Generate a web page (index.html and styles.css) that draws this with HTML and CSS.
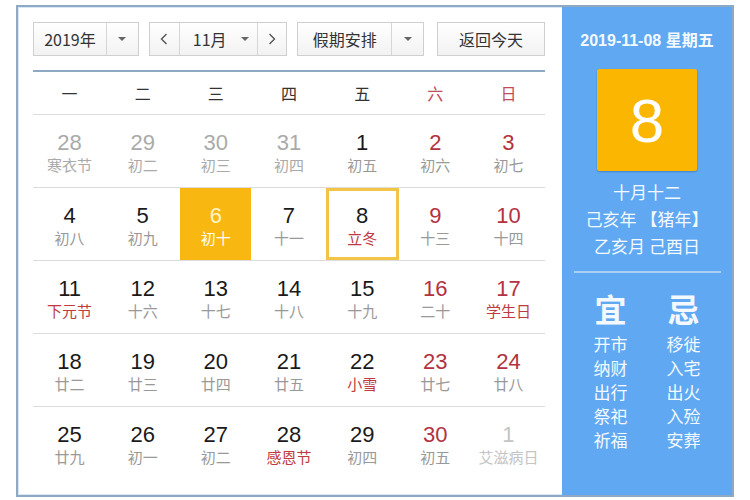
FILE: index.html
```html
<!DOCTYPE html>
<html lang="zh-CN">
<head>
<meta charset="utf-8">
<title>万年历</title>
<link rel="stylesheet" href="styles.css">
</head>
<body>
<div class="cal">
  <div class="main">
    <div class="controls">
      <div class="sel year">
        <span class="sel-text">2019年</span>
        <span class="sel-arrow"><i class="tri"></i></span>
      </div>
      <div class="sel month">
        <span class="nav"><svg width="8" height="12" viewBox="0 0 8 12"><path d="M6.5 1 L1.5 6 L6.5 11" fill="none" stroke="#555" stroke-width="1.4"/></svg></span>
        <span class="month-mid">11月<i class="tri"></i></span>
        <span class="nav next"><svg width="8" height="12" viewBox="0 0 8 12"><path d="M1.5 1 L6.5 6 L1.5 11" fill="none" stroke="#555" stroke-width="1.4"/></svg></span>
      </div>
      <div class="sel holiday">
        <span class="sel-text">假期安排</span>
        <span class="sel-arrow"><i class="tri"></i></span>
      </div>
      <div class="btn">返回今天</div>
    </div>

    <div class="week">
      <span>一</span><span>二</span><span>三</span><span>四</span><span>五</span><span class="we">六</span><span class="we">日</span>
    </div>

    <div class="row">
      <div class="cell other"><b>28</b><em>寒衣节</em></div>
      <div class="cell other"><b>29</b><em>初二</em></div>
      <div class="cell other"><b>30</b><em>初三</em></div>
      <div class="cell other"><b>31</b><em>初四</em></div>
      <div class="cell"><b>1</b><em>初五</em></div>
      <div class="cell wk"><b>2</b><em>初六</em></div>
      <div class="cell wk"><b>3</b><em>初七</em></div>
    </div>
    <div class="row">
      <div class="cell"><b>4</b><em>初八</em></div>
      <div class="cell"><b>5</b><em>初九</em></div>
      <div class="cell picked"><b>6</b><em>初十</em></div>
      <div class="cell"><b>7</b><em>十一</em></div>
      <div class="cell today"><b>8</b><em class="fest">立冬</em></div>
      <div class="cell wk"><b>9</b><em>十三</em></div>
      <div class="cell wk"><b>10</b><em>十四</em></div>
    </div>
    <div class="row">
      <div class="cell"><b>11</b><em class="fest">下元节</em></div>
      <div class="cell"><b>12</b><em>十六</em></div>
      <div class="cell"><b>13</b><em>十七</em></div>
      <div class="cell"><b>14</b><em>十八</em></div>
      <div class="cell"><b>15</b><em>十九</em></div>
      <div class="cell wk"><b>16</b><em>二十</em></div>
      <div class="cell wk"><b>17</b><em class="fest">学生日</em></div>
    </div>
    <div class="row">
      <div class="cell"><b>18</b><em>廿二</em></div>
      <div class="cell"><b>19</b><em>廿三</em></div>
      <div class="cell"><b>20</b><em>廿四</em></div>
      <div class="cell"><b>21</b><em>廿五</em></div>
      <div class="cell"><b>22</b><em class="fest">小雪</em></div>
      <div class="cell wk"><b>23</b><em>廿七</em></div>
      <div class="cell wk"><b>24</b><em>廿八</em></div>
    </div>
    <div class="row last">
      <div class="cell"><b>25</b><em>廿九</em></div>
      <div class="cell"><b>26</b><em>初一</em></div>
      <div class="cell"><b>27</b><em>初二</em></div>
      <div class="cell"><b>28</b><em class="fest">感恩节</em></div>
      <div class="cell"><b>29</b><em>初四</em></div>
      <div class="cell wk"><b>30</b><em>初五</em></div>
      <div class="cell other light"><b>1</b><em>艾滋病日</em></div>
    </div>
  </div>

  <div class="side">
    <div class="side-date">2019-11-08 星期五</div>
    <div class="big-day">8</div>
    <div class="lunar">
      <div>十月十二</div>
      <div>己亥年 【猪年】</div>
      <div>乙亥月 己酉日</div>
    </div>
    <div class="divider"></div>
    <div class="yiji">
      <div class="col">
        <div class="yj-title">宜</div>
        <div>开市</div><div>纳财</div><div>出行</div><div>祭祀</div><div>祈福</div>
      </div>
      <div class="col">
        <div class="yj-title">忌</div>
        <div>移徙</div><div>入宅</div><div>出火</div><div>入殓</div><div>安葬</div>
      </div>
    </div>
  </div>
</div>
</body>
</html>
```

FILE: styles.css
```css
* { box-sizing: border-box; }

body {
  margin: 0;
  background: #ffffff;
  font-family: "Noto Sans CJK SC", "Liberation Sans", sans-serif;
  color: #333;
}

.cal {
  margin: 5px 0 0 16px;
  width: 718px;
  height: 492px;
  border: 2px solid #8fa9c2;
  display: flex;
  background: #fff;
}

.main {
  width: 544px;
  padding: 14px 17px 0 14px;
  border: 1px solid #d6e7f6;
  border-right: none;
}

.controls {
  display: flex;
  height: 34px;
  font-size: 16px;
  color: #333;
}

.sel, .btn {
  height: 34px;
  border: 1px solid #cfcfcf;
  background: linear-gradient(#ffffff, #f2f2f2);
  display: flex;
  align-items: center;
}

.year { width: 106px; }
.month { width: 139px; margin-left: 10px; }
.holiday { width: 127px; margin-left: 10px; }
.btn { width: 108px; margin-left: 13px; justify-content: center; }

.sel-text {
  flex: 1;
  height: 100%;
  display: flex;
  align-items: center;
  justify-content: center;
  border-right: 1px solid #d6d6d6;
}

.sel-arrow {
  width: 31px;
  display: flex;
  justify-content: center;
  align-items: center;
}

.tri {
  display: inline-block;
  width: 0;
  height: 0;
  border-left: 4px solid transparent;
  border-right: 4px solid transparent;
  border-top: 4px solid #666;
}

.nav {
  width: 30px;
  height: 100%;
  display: flex;
  align-items: center;
  justify-content: center;
  border-right: 1px solid #d6d6d6;
}

.nav.next {
  border-right: none;
  border-left: 1px solid #d6d6d6;
  width: 29px;
}

.month-mid {
  flex: 1;
  display: flex;
  align-items: center;
  justify-content: center;
  gap: 14px;
  padding-left: 4px;
}

.week {
  margin-top: 14px;
  border-top: 2px solid #8fa9c2;
  border-bottom: 1px solid #dcdcdc;
  height: 45px;
  display: grid;
  grid-template-columns: repeat(7, 1fr);
  align-items: center;
  text-align: center;
  font-size: 16px;
  color: #333;
}

.week .we { color: #c24d58; }

.row {
  display: grid;
  grid-template-columns: repeat(7, 1fr);
  height: 73px;
  border-bottom: 1px solid #dcdcdc;
}

.row.last { border-bottom: none; }

.cell {
  display: flex;
  flex-direction: column;
  align-items: center;
  padding-top: 16px;
}

.cell b {
  font-family: "Liberation Sans", "Noto Sans CJK SC", sans-serif;
  font-weight: normal;
  font-size: 22px;
  line-height: 24px;
  color: #1a1a1a;
}

.cell em {
  font-style: normal;
  font-size: 15px;
  line-height: 20px;
  color: #999;
}

.cell.wk b { color: #b3323f; }
.cell em.fest { color: #c03a42; }

.cell.other b { color: #aaa; }
.cell.other em { color: #aaa; }
.cell.light b, .cell.light em { color: #c4c4c4; }

.cell.picked {
  background: #f9b712;
  margin: 0 1px;
}
.cell.picked b { color: #fff4c8; }
.cell.picked em { color: #fff; }

.cell.today {
  border: 3px solid #f3c445;
  padding-top: 13px;
}

.side {
  width: 170px;
  background: #60a9f2;
  color: #fff;
  display: flex;
  flex-direction: column;
  align-items: center;
  padding-top: 23px;
}

.side-date {
  font-family: "Liberation Sans", "Noto Sans CJK SC", sans-serif;
  font-size: 16px;
  line-height: 22px;
  font-weight: bold;
  color: #f4f9ff;
}

.big-day {
  margin-top: 17px;
  width: 100px;
  height: 102px;
  background: #fbb602;
  border-radius: 2px;
  box-shadow: 0 1px 2px rgba(0, 60, 130, 0.35);
  display: flex;
  align-items: center;
  justify-content: center;
  font-family: "Liberation Sans", sans-serif;
  font-size: 62px;
  color: #fff;
}

.lunar {
  margin-top: 7px;
  text-align: center;
  font-size: 17px;
  line-height: 27px;
  color: #f4f9ff;
}

.divider {
  margin-top: 12px;
  width: 147px;
  height: 2px;
  background: #a9d1f7;
}

.yiji {
  margin-top: 16px;
  display: grid;
  grid-template-columns: 44px 44px;
  column-gap: 29px;
  justify-content: center;
  text-align: center;
  font-size: 17px;
  line-height: 24px;
  color: #f4f9ff;
}

.yj-title {
  font-size: 32px;
  line-height: 38px;
  margin-bottom: 5px;
  font-weight: bold;
}
```
